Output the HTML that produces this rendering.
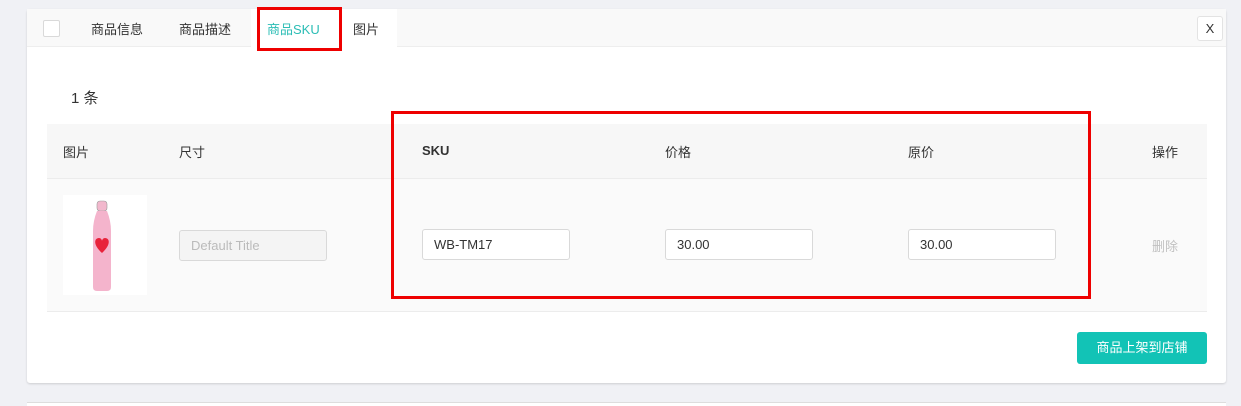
<!DOCTYPE html>
<html><head><meta charset="utf-8"><style>
body{margin:0;width:1241px;height:405px;background:#f0f1f5;font-family:"Liberation Sans","Noto Sans CJK SC",sans-serif;font-size:13px;color:#333;position:relative;overflow:hidden}
.abs{position:absolute}
.card{left:27px;top:9px;width:1199px;height:374px;background:#fff;border-radius:3px;box-shadow:0 1px 2px rgba(0,0,0,.15)}
.tabbar{left:27px;top:9px;width:1199px;height:37px;background:#f9f9f9;border-bottom:1px solid #eee}
.inp{background:#fff;border:1px solid #d9d9d9;border-radius:3px;height:31px;line-height:30px;padding-left:11px;box-sizing:border-box;width:148px}
.red{border:3px solid #e00;box-sizing:border-box}
</style></head><body>
<div class="abs card"></div>
<div class="abs tabbar"></div>
<div class="abs" style="left:251px;top:9px;width:146px;height:38px;background:#fff"></div>
<div class="abs" style="left:43px;top:20px;width:15px;height:15px;border:1px solid #d9d9d9;border-radius:2px;background:#fff"></div>
<div class="abs" style="left:91px;top:19px">商品信息</div>
<div class="abs" style="left:179px;top:19px">商品描述</div>
<div class="abs" style="left:267px;top:19px;color:#2bbdb5">商品SKU</div>
<div class="abs" style="left:353px;top:19px">图片</div>
<div class="abs red" style="left:257px;top:7px;width:85px;height:44px"></div>
<div class="abs" style="left:1197px;top:16px;width:24px;height:23px;border:1px solid #e3e3e3;border-radius:3px;background:#fff;text-align:center;line-height:23px;font-size:13px">X</div>
<div class="abs" style="left:71px;top:87px;font-size:15px">1 条</div>
<div class="abs" style="left:47px;top:124px;width:1160px;height:54px;background:#f7f7f7;border-bottom:1px solid #ececec"></div>
<div class="abs" style="left:47px;top:179px;width:1160px;height:132px;background:#fafafa;border-bottom:1px solid #ececec"></div>
<div class="abs" style="left:63px;top:142px">图片</div>
<div class="abs" style="left:179px;top:142px">尺寸</div>
<div class="abs" style="left:422px;top:143px;font-weight:bold">SKU</div>
<div class="abs" style="left:665px;top:142px">价格</div>
<div class="abs" style="left:908px;top:142px">原价</div>
<div class="abs" style="left:1152px;top:142px">操作</div>
<div class="abs" style="left:63px;top:195px;width:84px;height:100px;background:#fff"></div>
<svg class="abs" style="left:63px;top:195px" width="84" height="100"><rect x="34" y="6" width="10" height="10" rx="3" fill="#f2b8cd" stroke="#999" stroke-width="0.6"/><path d="M34 16 Q30 26 30 36 L30 92 Q30 96 34 96 L44 96 Q48 96 48 92 L48 36 Q48 26 44 16 Z" fill="#f4b4cc"/><path d="M39 58 C30 50 31 43 36 43 C38 43 39 45 39 46 C39 45 40 43 42 43 C47 43 48 50 39 58Z" fill="#e8223a"/></svg>
<div class="abs inp" style="left:179px;top:230px;background:#f4f4f4;color:#bbb">Default Title</div>
<div class="abs inp" style="left:422px;top:229px">WB-TM17</div>
<div class="abs inp" style="left:665px;top:229px">30.00</div>
<div class="abs inp" style="left:908px;top:229px">30.00</div>
<div class="abs" style="left:1152px;top:236px;color:#c0c0c0">删除</div>
<div class="abs red" style="left:391px;top:111px;width:700px;height:188px"></div>
<div class="abs" style="left:1077px;top:332px;width:130px;height:32px;background:#12c3b6;border-radius:3px;color:#fff;text-align:center;line-height:32px;font-size:13px">商品上架到店铺</div>
<div class="abs" style="left:27px;top:402px;width:1199px;height:3px;background:#fff;border-top:1px solid #ddd"></div>
</body></html>
